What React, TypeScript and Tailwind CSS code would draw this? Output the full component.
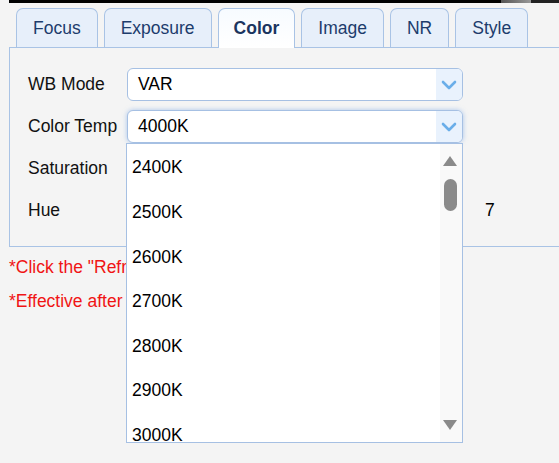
import React from "react";

const tabs = ["Focus", "Exposure", "Color", "Image", "NR", "Style"];
const temps = ["2400K", "2500K", "2600K", "2700K", "2800K", "2900K", "3000K"];

function Chevron() {
  return (
    <svg width="16" height="10" viewBox="0 0 16 10" fill="none">
      <path d="M2 2l6 6 6-6" stroke="#6aaee9" strokeWidth="2.6" strokeLinecap="round" strokeLinejoin="round" />
    </svg>
  );
}

function Select({ value, focused = false }: { value: string; focused?: boolean }) {
  return (
    <div
      className={`flex h-[33px] w-[336px] items-stretch overflow-hidden rounded-[6px] border border-[#a6c0e3] bg-white ${
        focused ? "shadow-[0_0_5px_rgba(110,160,230,0.55)]" : ""
      }`}
    >
      <div className="flex flex-1 items-center pl-[10px] text-[17.5px] text-black">{value}</div>
      <div className="flex w-[26px] items-center justify-center bg-[#e9f2fd]">
        <Chevron />
      </div>
    </div>
  );
}

export default function App() {
  return (
    <div className="relative h-[463px] w-[559px] overflow-hidden bg-[#f4f4f4] font-['Liberation_Sans',Arial,sans-serif] text-[17.5px]">
      {/* top strip */}
      <div className="ml-[9px] flex h-[3px]">
        <div className="flex-1 bg-black" />
        <div className="w-[30px] bg-gradient-to-r from-[#555] to-[#999]" />
        <div className="w-[28px] bg-[#222]" />
      </div>

      <div className="ml-[9px]">
        {/* tabs */}
        <div className="flex h-[45px] items-end gap-[6px] border-b border-[#a9c3e5] pl-[7px]">
          {tabs.map((t) =>
            t === "Color" ? (
              <div
                key={t}
                className="relative -mb-px flex h-[40px] items-center rounded-t-[7px] border border-b-0 border-[#a9c3e5] bg-gradient-to-b from-[#f7fbff] to-white px-[15px] font-bold text-[#1b3560]"
              >
                {t}
              </div>
            ) : (
              <div
                key={t}
                className="flex h-[39px] items-center rounded-t-[7px] border border-b-0 border-[#a9c3e5] bg-[#e7effa] px-[16px] text-[#1d3c6c]"
              >
                {t}
              </div>
            )
          )}
        </div>

        {/* panel */}
        <div className="flex h-[199px] flex-col gap-[9px] border-b border-l border-[#a9c3e5] pl-[18px] pt-[20px]">
          <div className="flex h-[33px] items-center">
            <span className="w-[99px] text-[#111]">WB Mode</span>
            <Select value="VAR" />
          </div>
          <div className="flex h-[33px] items-center">
            <span className="w-[99px] text-[#111]">Color Temp</span>
            <Select value="4000K" focused />
          </div>
          <div className="flex h-[33px] items-center">
            <span className="w-[99px] text-[#111]">Saturation</span>
          </div>
          <div className="flex h-[33px] items-center">
            <span className="w-[99px] text-[#111]">Hue</span>
            <span className="ml-[358px] text-black">7</span>
          </div>
        </div>
      </div>

      {/* notes */}
      <div className="ml-[9px] mt-[10px] flex flex-col gap-[14px] leading-[20px] text-[#f01414]">
        <div>*Click the "Refresh" button to apply changes</div>
        <div>*Effective after restart</div>
      </div>

      {/* open dropdown list */}
      <div className="absolute left-[126px] top-[143px] flex h-[300px] w-[337px] overflow-hidden border border-[#a6c0e3] bg-white">
        <div className="flex-1 pl-[5px] pt-[1px]">
          {temps.map((v) => (
            <div key={v} className="flex h-[44.67px] items-center text-black">
              {v}
            </div>
          ))}
        </div>
        <div className="relative w-[22px] bg-[#f9f9f9]">
          <div className="absolute left-[3px] top-[12px] h-0 w-0 border-x-[7px] border-b-[10px] border-x-transparent border-b-[#8a8a8a]" />
          <div className="absolute left-[4px] top-[35px] h-[32px] w-[13px] rounded-full bg-[#8a8a8a]" />
          <div className="absolute left-[3px] top-[276px] h-0 w-0 border-x-[7px] border-t-[10px] border-x-transparent border-t-[#8a8a8a]" />
        </div>
      </div>
    </div>
  );
}
